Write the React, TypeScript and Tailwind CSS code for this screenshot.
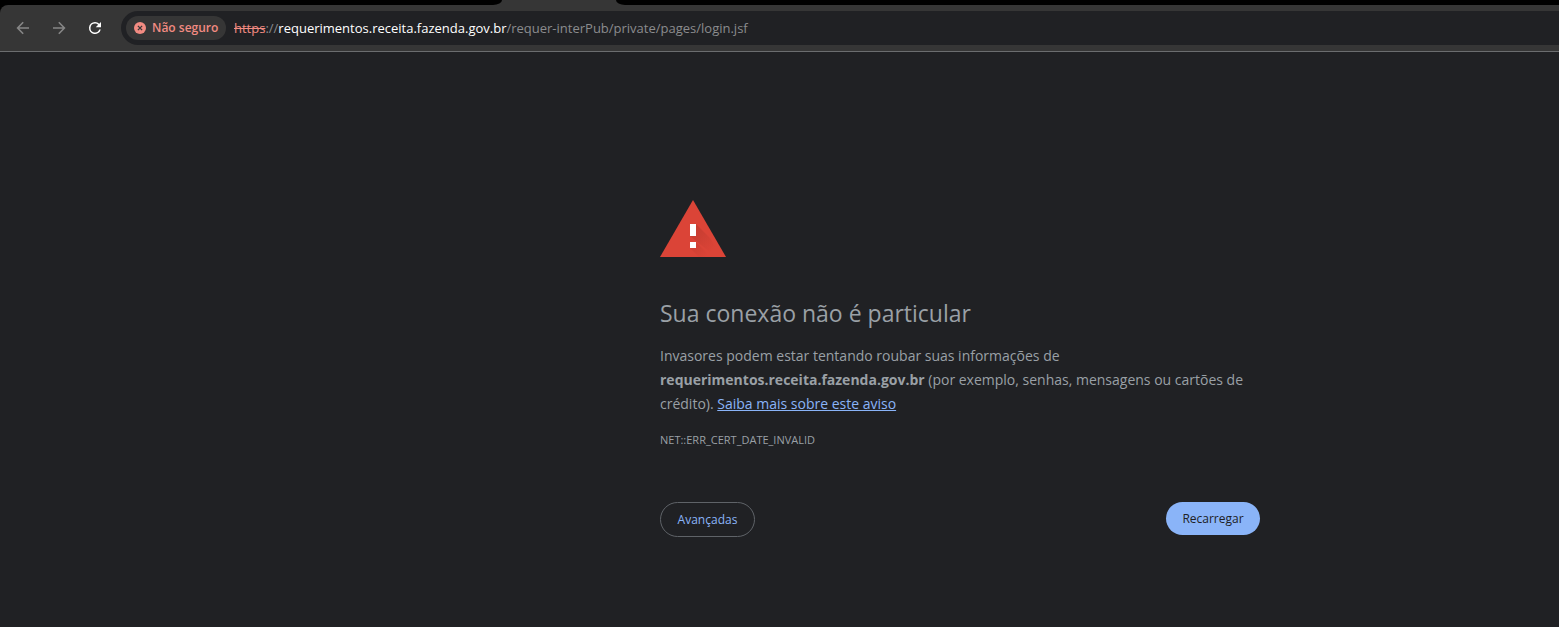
import React from "react";

function BackIcon() {
  return (
    <svg width="18" height="18" viewBox="0 0 18 18" fill="none" stroke="currentColor" strokeWidth="1.6" aria-hidden="true">
      <path d="M15 9H4M9.2 3.3 3.6 9l5.6 5.7" />
    </svg>
  );
}

function ForwardIcon() {
  return (
    <svg width="18" height="18" viewBox="0 0 18 18" fill="none" stroke="currentColor" strokeWidth="1.6" aria-hidden="true">
      <path d="M3 9h11M8.8 3.3 14.4 9l-5.6 5.7" />
    </svg>
  );
}

function ReloadIcon() {
  return (
    <svg width="18" height="18" viewBox="0 0 24 24" fill="currentColor" aria-hidden="true">
      <path d="M17.65 6.35A7.96 7.96 0 0 0 12 4a8 8 0 1 0 7.73 10h-2.08A6 6 0 1 1 12 6c1.66 0 3.14.69 4.22 1.78L13 11h7V4z" />
    </svg>
  );
}

function NotSecureIcon() {
  return (
    <svg width="12" height="12" viewBox="0 0 12 12" aria-hidden="true">
      <circle cx="6" cy="6" r="6" fill="#f28b82" />
      <path d="M3.9 3.9l4.2 4.2M8.1 3.9l-4.2 4.2" stroke="#363636" strokeWidth="1.3" />
    </svg>
  );
}

function WarningIcon() {
  return (
    <svg width="66" height="57" viewBox="0 0 66 57" role="img" aria-label="Aviso">
      <defs>
        <linearGradient id="shade" x1="30" y1="27" x2="53" y2="50" gradientUnits="userSpaceOnUse">
          <stop offset="0" stopColor="#b9382d" stopOpacity="0.7" />
          <stop offset="1" stopColor="#b9382d" stopOpacity="0" />
        </linearGradient>
      </defs>
      <path d="M33 0 66 57H0Z" fill="#db4437" />
      <path d="M36 24 50 38 62 57H56L30 36h6Z M36 42 51 57H39L30 48h6Z" fill="url(#shade)" />
      <path d="M30 24h6v12h-6zM30 42h6v6h-6z" fill="#fff" />
    </svg>
  );
}

function TabStrip() {
  return (
    <div className="grid h-[5px] grid-cols-[502fr_114fr_943fr] bg-[#363636]">
      <div className="rounded-br-[9px_5px] bg-black" />
      <div />
      <div className="rounded-bl-[9px_5px] bg-black" />
    </div>
  );
}

function Toolbar() {
  return (
    <div className="bg-black">
      <div className="flex h-[47px] items-center rounded-tl-lg border-b border-[#6b6d6f] bg-[#363636] pl-3.5">
        <div className="flex gap-[18px]">
          <button type="button" aria-label="Voltar" className="text-[#868686]">
            <BackIcon />
          </button>
          <button type="button" aria-label="Avançar" className="text-[#868686]">
            <ForwardIcon />
          </button>
          <button type="button" aria-label="Recarregar página" className="text-white">
            <ReloadIcon />
          </button>
        </div>
        <div className="ml-[17px] flex h-[34px] flex-1 items-center gap-2 rounded-l-full bg-[#202124] pl-[5px]">
          <button
            type="button"
            className="flex h-6 w-[100px] items-center gap-1.5 rounded-full bg-[#363636] pl-2 text-[12px] font-semibold whitespace-nowrap text-[#f28b82]"
          >
            <NotSecureIcon />
            Não seguro
          </button>
          <div className="text-[13px] leading-5 whitespace-nowrap text-[#8b8c8e]">
            <span className="text-[#f28b82] line-through">https</span>://
            <span className="text-white">requerimentos.receita.fazenda.gov.br</span>
            /requer-interPub/private/pages/login.jsf
          </div>
        </div>
      </div>
    </div>
  );
}

export default function App() {
  return (
    <div className="min-h-screen bg-[#202124] font-['Open_Sans','Noto_Sans',sans-serif] text-[#9aa0a6]">
      <header>
        <TabStrip />
        <Toolbar />
      </header>
      <div className="grid grid-cols-[660fr_600fr_299fr]">
        <main className="col-start-2 pt-[148px] pb-10">
          <WarningIcon />
          <h1 className="mt-10 text-[23px] leading-8">Sua conexão não é particular</h1>
          <p className="mt-[15px] text-[14px] leading-6">
            Invasores podem estar tentando roubar suas informações de{" "}
            <strong className="font-bold">requerimentos.receita.fazenda.gov.br</strong> (por exemplo, senhas, mensagens
            ou cartões de crédito).{" "}
            <a href="#aviso" className="text-[#8ab4f8] underline">
              Saiba mais sobre este aviso
            </a>
          </p>
          <p className="mt-3 text-[11px] leading-6">NET::ERR_CERT_DATE_INVALID</p>
          <div className="mt-[50px] flex items-start justify-between text-[12px]">
            <button
              type="button"
              className="h-[35px] w-[95px] rounded-full border border-[#5f6368] pt-px text-[#8ab4f8]"
            >
              Avançadas
            </button>
            <button type="button" className="h-[33px] w-[94px] rounded-full bg-[#8ab4f8] pt-px text-[#202124]">
              Recarregar
            </button>
          </div>
        </main>
      </div>
    </div>
  );
}
